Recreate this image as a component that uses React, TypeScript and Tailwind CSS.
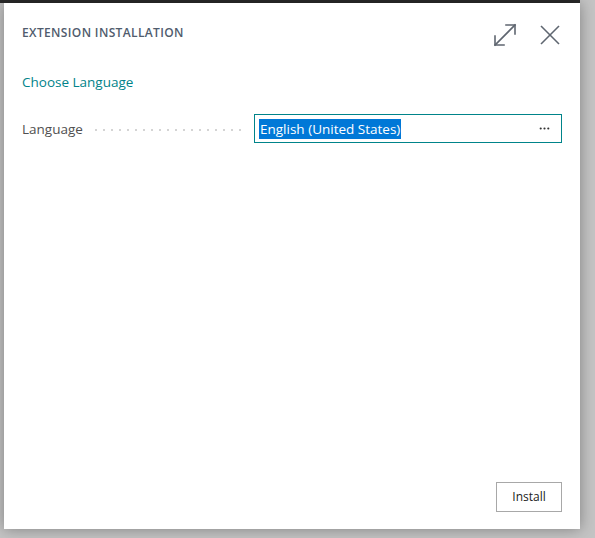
import { MoreHorizontal } from 'lucide-react';

function ExpandIcon() {
  return (
    <svg width="24" height="24" viewBox="0 0 24 24" fill="none" stroke="#5f6670" strokeWidth="1.6" strokeLinecap="square">
      <path d="M2 22 L22 2" />
      <path d="M13 2 H22 V11" />
      <path d="M2 13 V22 H11" />
    </svg>
  );
}

function CloseIcon() {
  return (
    <svg width="20" height="20" viewBox="0 0 20 20" fill="none" stroke="#5f6670" strokeWidth="1.6">
      <path d="M1 1 L19 19" />
      <path d="M19 1 L1 19" />
    </svg>
  );
}

export default function App() {
  return (
    <div
      className="relative h-[538px] w-[595px] overflow-hidden bg-[#c4c4c4]"
      style={{ fontFamily: '"Open Sans", "Noto Sans", sans-serif' }}
    >
      <div className="h-[3px] w-[580px] bg-[#2b2b2b]" />
      <div className="ml-[4px] flex h-[526px] w-[576px] flex-col bg-white shadow-[0_0_14px_rgba(0,0,0,0.35)]">
        <div className="flex items-start justify-between pl-[18px] pr-[20px] pt-[21px]">
          <h1 className="text-[12px] font-semibold uppercase tracking-[0.03em] text-[#505c6d]">
            Extension Installation
          </h1>
          <div className="-mt-[1px] flex items-center gap-[23px]">
            <ExpandIcon />
            <CloseIcon />
          </div>
        </div>

        <div className="pl-[18px] pt-[25px] text-[13.5px] text-[#00838a]">Choose Language</div>

        <div className="mt-[22px] flex items-center pl-[18px] pr-[18px]">
          <span className="text-[13.5px] text-[#505050]">Language</span>
          <span className="mx-[12px] mt-[2px] h-[2px] flex-1 bg-[linear-gradient(to_right,#d4d4d4_2px,transparent_2px)] bg-[length:8px_2px]" />
          <div className="flex h-[29px] w-[308px] items-center border border-[#00848a] pl-[4px] pr-[10px]">
            <span className="bg-[#0078d7] px-[1px] text-[13.5px] leading-[20px] text-white">
              English (United States)
            </span>
            <span className="ml-auto text-[#333]">
              <MoreHorizontal size={13} strokeWidth={2} />
            </span>
          </div>
        </div>

        <div className="mt-auto flex justify-end pb-[17px] pr-[18px]">
          <button className="h-[30px] w-[66px] border border-[#a8a8a8] bg-white text-[12px] text-[#212121]">
            Install
          </button>
        </div>
      </div>
    </div>
  );
}
